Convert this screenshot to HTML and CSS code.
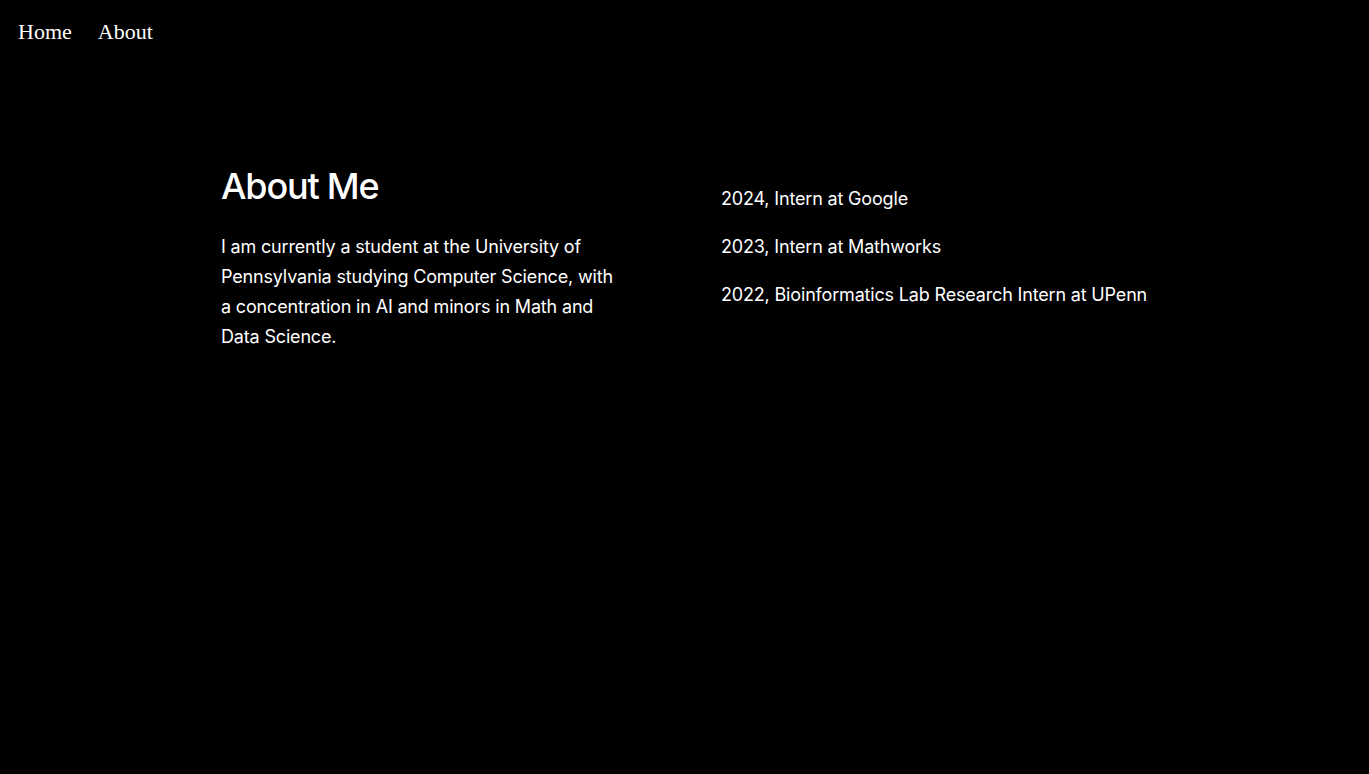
FILE: index.html
```html
<!DOCTYPE html>
<html>
<head>
<meta charset="utf-8">
<link rel="stylesheet" href="styles.css">
</head>
<body>
<nav class="nav">
  <a class="nav-link" href="#">Home</a>
  <a class="nav-link" href="#">About</a>
</nav>
<main class="about">
  <section class="intro">
    <h1 class="title">About Me</h1>
    <p class="text">I am currently a student at the University of Pennsylvania studying Computer Science, with a concentration in AI and minors in Math and Data Science.</p>
  </section>
  <ul class="timeline">
    <li>2024, Intern at Google</li>
    <li>2023, Intern at Mathworks</li>
    <li>2022, Bioinformatics Lab Research Intern at UPenn</li>
  </ul>
</main>
</body>
</html>
```
FILE: styles.css
```css
html, body {
  margin: 0;
  background: #000;
  color: #fff;
  height: 100%;
}
.nav {
  display: flex;
  gap: 26px;
  padding: 15px 18px;
  font-family: "Liberation Serif", serif;
  font-size: 22px;
  line-height: 34px;
}
.nav-link {
  color: #fff;
  text-decoration: none;
}
.about {
  display: grid;
  grid-template-columns: 400px 1fr;
  column-gap: 100px;
  padding: 101px 150px 0 221px;
  font-family: Inter, "Noto Sans", sans-serif;
}
.title {
  margin: 0 0 24px;
  font-size: 36px;
  line-height: 43px;
  font-weight: 500;
  letter-spacing: -1.2px;
}
.text {
  margin: 0;
  font-size: 18px;
  line-height: 30px;
  letter-spacing: -0.17px;
}
.timeline {
  list-style: none;
  margin: 0;
  padding: 19px 0 0;
  font-size: 18px;
  line-height: 30px;
  letter-spacing: -0.17px;
}
.timeline li {
  margin-bottom: 18px;
}
```
